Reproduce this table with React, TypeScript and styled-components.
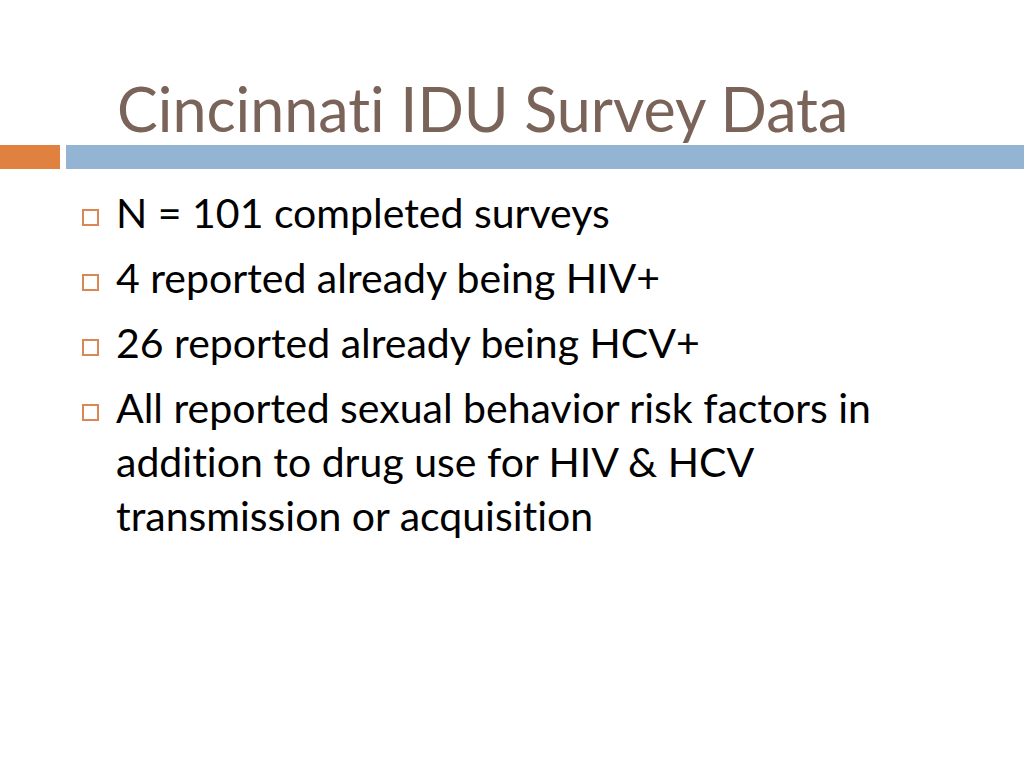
import styled, { createGlobalStyle } from "styled-components";

const GlobalStyle = createGlobalStyle`
  html, body {
    margin: 0;
    padding: 0;
    background: #ffffff;
  }
`;

const Slide = styled.div`
  width: 1024px;
  height: 768px;
  background: #ffffff;
  font-family: Lato, "Open Sans", sans-serif;
  font-variant-ligatures: none;
  overflow: hidden;
`;

const Title = styled.h1`
  margin: 0;
  padding: 74px 0 0 117px;
  height: 69px;
  box-sizing: content-box;
  font-size: 61px;
  font-weight: 400;
  line-height: 69px;
  color: #7a645a;
`;

const BarRow = styled.div`
  display: flex;
  gap: 6px;
  height: 24px;
  margin-top: 2px;
`;

const Bar = styled.div<{ color: string; width?: string }>`
  background: ${(p) => p.color};
  flex: ${(p) => (p.width ? `0 0 ${p.width}` : "1")};
`;

const List = styled.ul`
  list-style: none;
  margin: 0;
  padding: 17px 110px 0 82px;
  display: flex;
  flex-direction: column;
  gap: 11px;
`;

const Item = styled.li`
  display: flex;
  align-items: flex-start;
  font-size: 41px;
  line-height: 54px;
  color: #000000;
`;

const Box = styled.span`
  flex: 0 0 auto;
  box-sizing: border-box;
  width: 17px;
  height: 17px;
  border: 2px solid #da8753;
  margin: 23px 17px 0 0;
`;

const items = [
  "N = 101 completed surveys",
  "4 reported already being HIV+",
  "26 reported already being HCV+",
  "All reported sexual behavior risk factors in addition to drug use for HIV & HCV transmission or acquisition",
];

export default function App() {
  return (
    <Slide>
      <GlobalStyle />
      <Title>Cincinnati IDU Survey Data</Title>
      <BarRow>
        <Bar color="#e0813f" width="60px" />
        <Bar color="#93b5d3" />
      </BarRow>
      <List>
        {items.map((text) => (
          <Item key={text}>
            <Box />
            <span>{text}</span>
          </Item>
        ))}
      </List>
    </Slide>
  );
}
